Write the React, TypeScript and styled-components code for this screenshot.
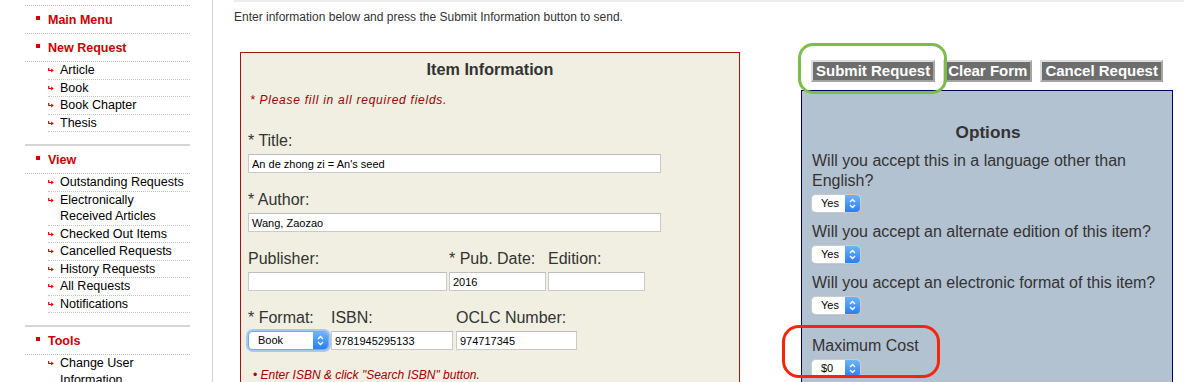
import React from 'react';
import styled, { createGlobalStyle } from 'styled-components';

const GlobalStyle = createGlobalStyle`
  html, body {
    margin: 0;
    padding: 0;
    background: #fff;
    font-family: "Liberation Sans", Arial, Helvetica, sans-serif;
    overflow: hidden;
  }
`;

const menu = [
  { title: 'Main Menu', items: [] as string[] },
  { title: 'New Request', items: ['Article', 'Book', 'Book Chapter', 'Thesis'] },
  {
    title: 'View',
    items: [
      'Outstanding Requests',
      'Electronically Received Articles',
      'Checked Out Items',
      'Cancelled Requests',
      'History Requests',
      'All Requests',
      'Notifications',
    ],
  },
  { title: 'Tools', items: ['Change User Information'] },
];

const questions = [
  'Will you accept this in a language other than English?',
  'Will you accept an alternate edition of this item?',
  'Will you accept an electronic format of this item?',
];

const Arrow = () => (
  <svg width="6" height="5" viewBox="0 0 6 5">
    <path d="M0.7 0 V2.5 H3.6" fill="none" stroke="#d40000" strokeWidth="1.2" />
    <path d="M3.2 0.6 L5.8 2.5 L3.2 4.4 Z" fill="#d40000" />
  </svg>
);

const Chevrons = () => (
  <svg width="7" height="11" viewBox="0 0 7 11">
    <path d="M1 4 L3.5 1.5 L6 4" fill="none" stroke="#fff" strokeWidth="1.3" />
    <path d="M1 7 L3.5 9.5 L6 7" fill="none" stroke="#fff" strokeWidth="1.3" />
  </svg>
);

const Select = ({ value, width, focus }: { value: string; width: number; focus?: boolean }) => (
  <SelectBox $w={width} $focus={focus}>
    <SelectText>{value}</SelectText>
    <SelectArrow>
      <Chevrons />
    </SelectArrow>
  </SelectBox>
);

export default function App() {
  return (
    <>
      <GlobalStyle />
      <Page>
        <Sidebar>
          {menu.map((sec, i) => (
            <Section key={sec.title} $first={i === 0} $solid={i > 1}>
              <SectionHeader>
                <Bullet />
                {sec.title}
              </SectionHeader>
              {sec.items.length > 0 && (
                <ItemList>
                  {sec.items.map((it) => (
                    <MenuItem key={it}>
                      <ArrowWrap>
                        <Arrow />
                      </ArrowWrap>
                      <ItemText>{it}</ItemText>
                    </MenuItem>
                  ))}
                </ItemList>
              )}
            </Section>
          ))}
        </Sidebar>

        <Main>
          <TopRule />
          <Intro>Enter information below and press the Submit Information button to send.</Intro>
          <ContentRow>
            <ItemBox>
              <BoxTitle>Item Information</BoxTitle>
              <Notice>* Please fill in all required fields.</Notice>

              <Field>
                <Label>* Title:</Label>
                <Input $w={413} defaultValue="An de zhong zi = An's seed" />
              </Field>
              <Field>
                <Label>* Author:</Label>
                <Input $w={413} defaultValue="Wang, Zaozao" />
              </Field>
              <FieldRow $gap={2}>
                <Field>
                  <Label>Publisher:</Label>
                  <Input $w={199} defaultValue="" />
                </Field>
                <Field>
                  <Label>* Pub. Date:</Label>
                  <Input $w={97} defaultValue="2016" />
                </Field>
                <Field>
                  <Label>Edition:</Label>
                  <Input $w={97} defaultValue="" />
                </Field>
              </FieldRow>
              <FieldRow $gap={3}>
                <Field>
                  <Label>* Format:</Label>
                  <FormatSlot>
                    <Select value="Book" width={79} focus />
                  </FormatSlot>
                </Field>
                <Field>
                  <Label>ISBN:</Label>
                  <Input $w={122} defaultValue="9781945295133" />
                </Field>
                <Field>
                  <Label>OCLC Number:</Label>
                  <Input $w={121} defaultValue="974717345" />
                </Field>
              </FieldRow>
              <Hint>• Enter ISBN &amp; click "Search ISBN" button.</Hint>
            </ItemBox>

            <RightCol>
              <ButtonRow>
                <SubmitWrap>
                  <Button>Submit Request</Button>
                  <GreenRing />
                </SubmitWrap>
                <Button>Clear Form</Button>
                <Button>Cancel Request</Button>
              </ButtonRow>
              <OptionsPanel>
                <PanelTitle>Options</PanelTitle>
                {questions.map((q) => (
                  <Question key={q}>
                    <QText>{q}</QText>
                    <Select value="Yes" width={48} />
                  </Question>
                ))}
                <CostBlock>
                  <QText>Maximum Cost</QText>
                  <Select value="$0" width={48} />
                  <RedRing />
                </CostBlock>
                <QText>Most ILL Requests cost the library about $10.00</QText>
              </OptionsPanel>
            </RightCol>
          </ContentRow>
        </Main>
      </Page>
    </>
  );
}

const Page = styled.div`
  display: flex;
  height: 382px;
  overflow: hidden;
`;

const Sidebar = styled.nav`
  width: 213px;
  flex-shrink: 0;
  padding: 5px 0 0 25px;
  box-sizing: border-box;
  border-right: 1px solid #d2d2d2;
`;

const Section = styled.div<{ $first?: boolean; $solid?: boolean }>`
  width: 165px;
  border-top: ${(p) => (p.$first ? '1px dotted #bdbdbd' : p.$solid ? '2px solid #d6d6d6' : 'none')};
  margin-top: ${(p) => (p.$solid ? '12px' : '0')};
`;

const SectionHeader = styled.div`
  display: flex;
  align-items: center;
  height: 27px;
  border-bottom: 1px dotted #bdbdbd;
  color: #cc0000;
  font-weight: bold;
  font-size: 12.5px;
`;

const Bullet = styled.span`
  width: 4px;
  height: 4px;
  background: #d40000;
  margin: 0 8px -1px 11px;
  align-self: center;
  position: relative;
  top: -2px;
`;

const ItemList = styled.ul`
  list-style: none;
  margin: 0 0 0 23px;
  padding: 0;
`;

const MenuItem = styled.li`
  display: flex;
  border-bottom: 1px dotted #c4c4c4;
  font-size: 12.5px;
  line-height: 16.5px;
  color: #000;
`;

const ArrowWrap = styled.span`
  width: 12px;
  flex-shrink: 0;
  display: flex;
  padding-top: 6px;
`;

const ItemText = styled.span`
  max-width: 127px;
`;

const Main = styled.main`
  flex: 1;
  padding-left: 21px;
`;

const TopRule = styled.div`
  border-top: 2px solid #ededed;
`;

const Intro = styled.div`
  margin-top: 7px;
  font-size: 12px;
  line-height: 16px;
  color: #333;
`;

const ContentRow = styled.div`
  display: flex;
  align-items: flex-start;
  margin-top: 27px;
`;

const ItemBox = styled.section`
  width: 500px;
  height: 360px;
  margin-left: 6px;
  box-sizing: border-box;
  border: 1px solid #a31515;
  background: #f0efe2;
  padding: 6px 7px 0;
  color: #333;
`;

const BoxTitle = styled.h2`
  margin: 0;
  text-align: center;
  font-size: 16.2px;
  line-height: 20px;
  color: #333;
`;

const Notice = styled.div`
  margin: 14px 0 23px 2px;
  font-size: 12px;
  line-height: 15px;
  font-style: italic;
  letter-spacing: 0.75px;
  color: #a00000;
`;

const Field = styled.div`
  margin-bottom: 17px;
`;

const FieldRow = styled.div<{ $gap: number }>`
  display: flex;
  gap: ${(p) => p.$gap}px;
`;

const Label = styled.div`
  font-size: 16px;
  line-height: 19px;
  margin-bottom: 4px;
  color: #333;
  white-space: nowrap;
`;

const Input = styled.input<{ $w: number }>`
  display: block;
  width: ${(p) => p.$w}px;
  height: 19px;
  box-sizing: border-box;
  margin: 0;
  border: 1px solid #cacaca;
  border-top-color: #bdbdbd;
  background: #fff;
  padding: 0 3px;
  font-family: "Liberation Sans", Arial, sans-serif;
  font-size: 11px;
  color: #000;
  outline: none;
`;

const FormatSlot = styled.div`
  padding: 1px 0 1px 1px;
`;

const Hint = styled.div`
  margin: 1px 0 0 5px;
  font-size: 12px;
  line-height: 15px;
  font-style: italic;
  color: #a00000;
`;

const RightCol = styled.div`
  margin-left: 61px;
  width: 372px;
`;

const ButtonRow = styled.div`
  display: flex;
  gap: 8px;
  margin: 8px 0 0 10px;
`;

const SubmitWrap = styled.div`
  position: relative;
`;

const Button = styled.button`
  height: 22px;
  padding: 0 3px;
  border: 2px solid;
  border-color: #dcdcdc #a4a4a4 #a4a4a4 #dcdcdc;
  background: #6e6e6e;
  color: #fff;
  font-family: "Liberation Sans", Arial, sans-serif;
  font-weight: bold;
  font-size: 15px;
  line-height: 18px;
  white-space: nowrap;
`;

const GreenRing = styled.div`
  position: absolute;
  left: -13px;
  top: -17px;
  width: 149px;
  height: 51px;
  box-sizing: border-box;
  border: 3px solid #7bbd46;
  border-radius: 15px;
  pointer-events: none;
`;

const OptionsPanel = styled.section`
  margin-top: 8px;
  height: 300px;
  box-sizing: border-box;
  border: 1px solid #000066;
  background: #b3c2d1;
  padding: 31px 8px 0 10px;
  color: #333;
`;

const PanelTitle = styled.h2`
  margin: 0 0 9px;
  text-align: center;
  font-size: 17.2px;
  line-height: 20px;
  color: #333;
`;

const Question = styled.div`
  margin-bottom: 10px;
`;

const QText = styled.div`
  font-size: 16px;
  line-height: 20px;
  margin-bottom: 4px;
`;

const CostBlock = styled.div`
  position: relative;
  margin: 22px 0 2px;
`;

const RedRing = styled.div`
  position: absolute;
  left: -30px;
  top: -11px;
  width: 158px;
  height: 53px;
  box-sizing: border-box;
  border: 3px solid #f4260c;
  border-radius: 17px;
  pointer-events: none;
`;

const SelectBox = styled.div<{ $w: number; $focus?: boolean }>`
  display: flex;
  width: ${(p) => p.$w}px;
  height: 17px;
  border-radius: 4px;
  overflow: hidden;
  background: #fff;
  box-shadow: ${(p) =>
    p.$focus
      ? '0 0 0 1px #7aa8e6, 0 0 0 3px #a7c8f2'
      : '0 0 0 1px #c7ccd3, 0 1px 1px rgba(0,0,0,0.15)'};
  font-size: 11px;
  color: #000;
`;

const SelectText = styled.span`
  flex: 1;
  padding-left: 9px;
  line-height: 17px;
`;

const SelectArrow = styled.span`
  width: 15px;
  display: flex;
  align-items: center;
  justify-content: center;
  background: linear-gradient(#6db4ff, #2a7ef0);
`;
